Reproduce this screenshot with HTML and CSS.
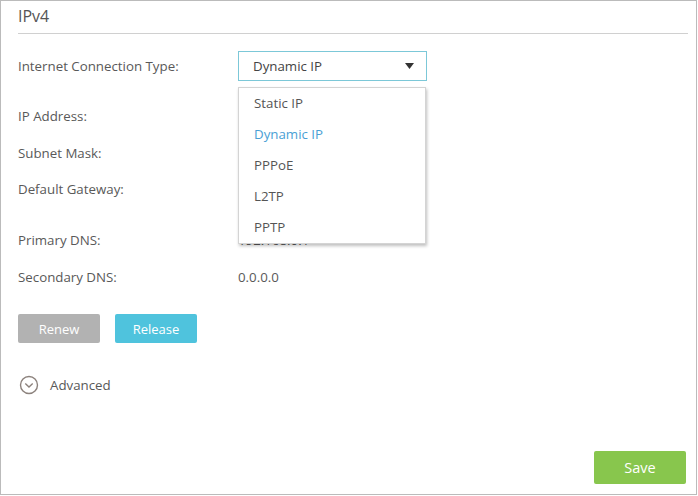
FILE: index.html
```html
<!DOCTYPE html>
<html>
<head>
<meta charset="utf-8">
<link rel="stylesheet" href="styles.css">
</head>
<body>
<div class="frame">
  <div class="header"><h1 class="title">IPv4</h1></div>
  <div class="form">
    <div class="row row-type">
      <div class="label">Internet Connection Type:</div>
      <div class="select-wrap">
        <div class="select">
          <span>Dynamic IP</span>
          <svg class="arrow" width="9" height="6" viewBox="0 0 9 6"><path d="M0 0 H9 L4.5 6 Z" fill="#333"/></svg>
        </div>
        <ul class="menu">
          <li>Static IP</li>
          <li class="active">Dynamic IP</li>
          <li>PPPoE</li>
          <li>L2TP</li>
          <li>PPTP</li>
        </ul>
      </div>
    </div>
    <div class="row r-ip"><div class="label">IP Address:</div></div>
    <div class="row r-mask"><div class="label">Subnet Mask:</div></div>
    <div class="row r-gw"><div class="label">Default Gateway:</div></div>
    <div class="row r-dns1"><div class="label">Primary DNS:</div><div class="value">192.168.0.1</div></div>
    <div class="row r-dns2"><div class="label">Secondary DNS:</div><div class="value">0.0.0.0</div></div>
    <div class="buttons">
      <button class="btn btn-renew">Renew</button>
      <button class="btn btn-release">Release</button>
    </div>
    <div class="advanced">
      <svg width="20" height="20" viewBox="0 0 20 20"><circle cx="10" cy="10" r="8.5" fill="none" stroke="#8c827d" stroke-width="1.4"/><path d="M6.3 8.5 L10 12 L13.7 8.5" fill="none" stroke="#8c827d" stroke-width="1.4"/></svg>
      <span>Advanced</span>
    </div>
  </div>
  <div class="footer"><button class="btn btn-save">Save</button></div>
</div>
</body>
</html>
```
FILE: styles.css
```css
html, body { margin: 0; padding: 0; background: #fff; }
body { font-family: "Open Sans", "Noto Sans", sans-serif; color: #595959; }
.frame {
  box-sizing: border-box;
  width: 697px;
  height: 495px;
  border: 1px solid #bbb;
  display: flex;
  flex-direction: column;
  padding: 0 10px 0 17px;
}
.header { border-bottom: 1px solid #d0d0d0; height: 32px; margin-right: -2px; }
.title { margin: 0; padding-top: 4px; font-size: 16px; font-weight: normal; color: #555; line-height: 22px; }
.form { display: flex; flex-direction: column; }
.row { display: flex; align-items: center; height: 20px; font-size: 13.3px; }
.label { width: 220px; flex: none; }
.value { color: #595959; }
.row-type { margin-top: 17px; height: 30px; }
.r-ip { margin-top: 25px; }
.r-mask { margin-top: 17px; }
.r-gw { margin-top: 16px; }
.r-dns1 { margin-top: 31px; }
.r-dns2 { margin-top: 17px; }
.select-wrap { position: relative; }
.select {
  box-sizing: border-box;
  width: 189px;
  height: 30px;
  border: 1px solid #7cc8d8;
  display: flex;
  align-items: center;
  justify-content: space-between;
  padding: 0 12px 0 14px;
  color: #444;
}
.menu {
  position: absolute;
  left: 0;
  top: 36px;
  box-sizing: border-box;
  width: 188px;
  margin: 0;
  padding: 0;
  list-style: none;
  background: #fff;
  border: 1px solid #d4d4d4;
  box-shadow: 1px 2px 3px rgba(0,0,0,0.25);
  z-index: 2;
}
.menu li { height: 31px; line-height: 30px; padding-left: 15px; color: #555; }
.menu li.active { color: #4a9fd5; }
.buttons { display: flex; gap: 15px; margin-top: 27px; }
.btn {
  border: none;
  border-radius: 2px;
  color: #fff;
  font-family: "Open Sans", "Noto Sans", sans-serif;
  font-size: 13px;
  padding: 0;
  width: 82px;
  height: 29px;
}
.btn-renew { background: #b2b2b2; }
.btn-release { background: #4fc3dd; }
.advanced { display: flex; align-items: center; gap: 11px; margin-top: 32px; margin-left: 1px; font-size: 13.3px; height: 20px; }
.footer { margin-top: auto; display: flex; justify-content: flex-end; padding-bottom: 10px; }
.btn-save { background: #88c64d; width: 92px; height: 33px; font-size: 14.5px; }
```
